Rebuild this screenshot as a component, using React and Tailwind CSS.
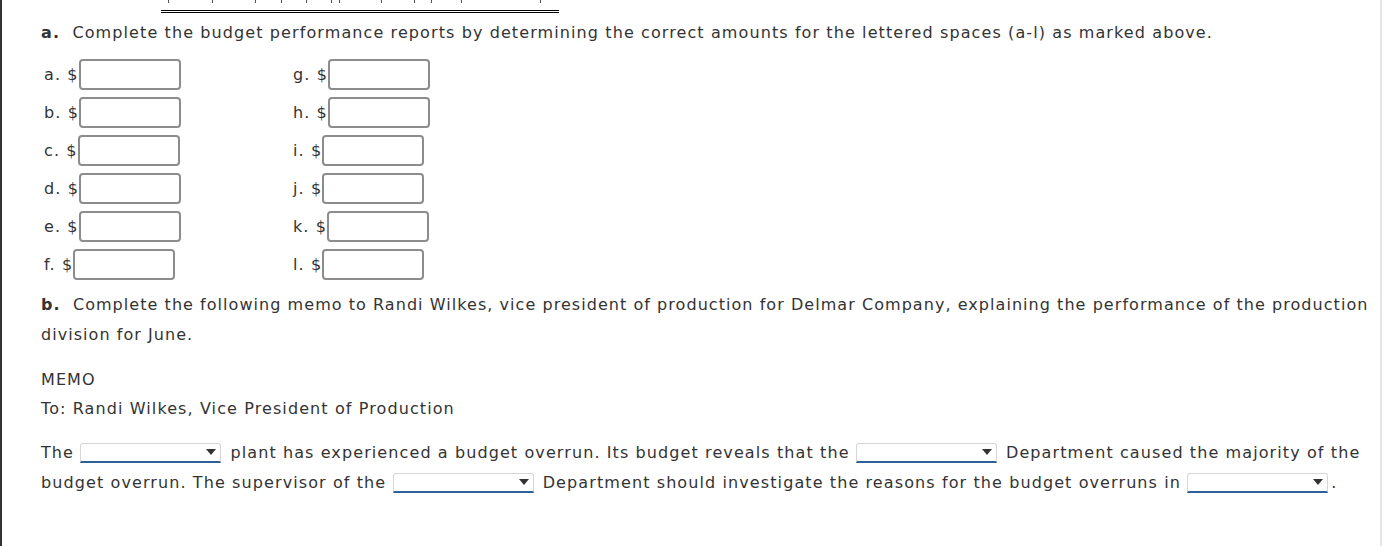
import React from 'react';

const leftRows = ['a.', 'b.', 'c.', 'd.', 'e.', 'f.']
const rightRows = ['g.', 'h.', 'i.', 'j.', 'k.', 'l.']

const ticks = [168, 212, 255, 281, 306, 331, 339, 381, 414, 431, 461, 540]

const AmountBox = ({ label }) => {
	return (
		<div className="flex items-center h-[31px]">
			<span>{label} $</span>
			<input type="text" className="w-[102px] h-[31px] rounded-[4px] border-2 border-[#8c8c8c] bg-white outline-none" />
		</div>
	)
}

const Dropdown = () => {
	return (
		<span className="inline-flex w-[141px] h-[20px] mr-[3px] align-middle relative -top-[1px] rounded-t-[3px] border border-[#d6d6d6] border-b-2 border-b-[#30609a] bg-white justify-end items-center pr-[4px]">
			<svg width="10" height="6" viewBox="0 0 10 6"><path d="M0 0 L10 0 L5 6 Z" fill="#333" /></svg>
		</span>
	)
}

const App = () => {

	return (
		<div className="w-[1384px] h-[546px] bg-white overflow-hidden text-[#333] text-[16px] tracking-[1.1px]" style={{ fontFamily: '"DejaVu Sans", Verdana, sans-serif' }}>
			<div className="w-[1382px] h-full border-l-2 border-[#333] border-r-2 border-r-[#e6e6e6] pl-[39px]">

				{/* cut off figures of the report above */}
				<div className="relative h-[10px]">
					{ticks.map(x => (
						<div key={x} className="absolute top-0 w-[1px] h-[3px] bg-[#555]" style={{ left: x - 41 }}></div>
					))}
				</div>
				<div className="ml-[120px] w-[398px] border-t-[3px] border-double border-black"></div>

				<div className="mt-[10px] leading-[20px]">
					<b>a.</b>&nbsp; Complete the budget performance reports by determining the correct amounts for the lettered spaces (a-l) as marked above.
				</div>

				<div className="mt-[16px] ml-[3px] flex">
					<div className="w-[249px] flex flex-col gap-[7px]">
						{leftRows.map(r => <AmountBox key={r} label={r} />)}
					</div>
					<div className="flex flex-col gap-[7px]">
						{rightRows.map(r => <AmountBox key={r} label={r} />)}
					</div>
				</div>

				<div className="mt-[10px] leading-[30px] tracking-[1.05px]">
					<b>b.</b>&nbsp; Complete the following memo to Randi Wilkes, vice president of production for Delmar Company, explaining the performance of the production division for June.
				</div>

				<div className="mt-[15px] leading-[29px]">
					<div>MEMO</div>
					<div>To: Randi Wilkes, Vice President of Production</div>
				</div>

				<div className="mt-[15px] leading-[30px] pr-[10px]">
					The <Dropdown /> plant has experienced a budget overrun. Its budget reveals that the <Dropdown /> Department caused the majority of the budget overrun. The supervisor of the <Dropdown /> Department should investigate the reasons for the budget overruns in <Dropdown />.
				</div>

			</div>
		</div>
	);
};

export default App;
